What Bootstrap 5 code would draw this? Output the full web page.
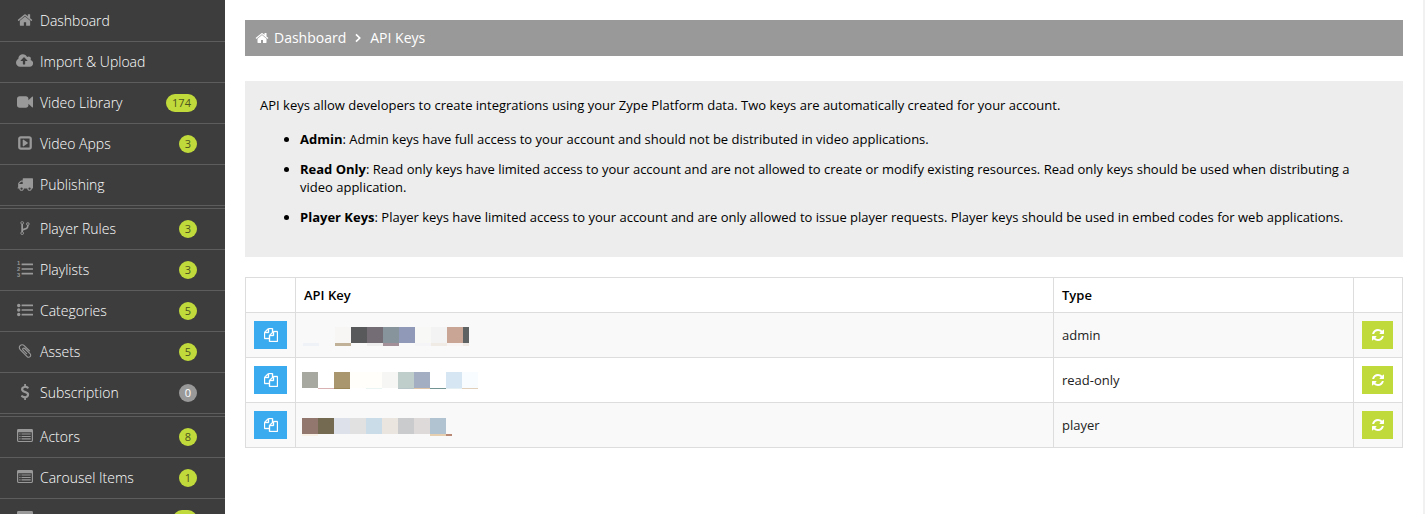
<!DOCTYPE html>
<html lang="en">
<head>
<meta charset="utf-8">
<meta name="viewport" content="width=device-width, initial-scale=1">
<title>API Keys</title>
<link href="https://cdn.jsdelivr.net/npm/bootstrap@5.3.0/dist/css/bootstrap.min.css" rel="stylesheet">
<style>
body{font-family:"Open Sans",sans-serif;font-size:13px;line-height:18px;color:#000;background:#fff;height:100vh;overflow:hidden}
.ico{fill:currentColor;display:block;overflow:visible;flex:none}
.sidebar{width:225px;background:#3d3d3d;padding-top:1px;height:514px;overflow:hidden}
.side-link{height:41px;padding:0 28px 0 15px;border-bottom:1px solid #5d5d5d;color:#fff;font-size:14px;font-weight:300;text-decoration:none;flex:none}
.side-link.group-start{border-top:1px solid #5d5d5d;height:42px;margin-top:2px}
.side-ico{width:20px;margin-right:5px;color:#999;position:relative;top:-1px}
.count{min-width:18px;height:18px;border-radius:9px;background:#c1da3b;color:#4c5320;font-size:11px;font-weight:400;line-height:18px;padding:0 6px;text-align:center}
.count.wide{padding:0 6px;min-width:31px}
.count.zero{background:#999;color:#fff}
.main-col{padding:20px 20px 0;border-right:2px solid #f1f1f1;height:514px}
.crumbs{height:36px;background:#999;color:#fff;font-size:14px;padding:0 10px;margin-bottom:25px}
.info{background:#ededed;padding:15px 15px 19px;height:176px;margin-bottom:20px}
.info p{margin-bottom:16px}
.info ul{padding:0 25px 0 40px;margin:0}
.info li{margin-bottom:12px}
.info li b{font-weight:700}
.keys{--bs-table-color:#222;--bs-table-striped-color:#222;--bs-table-striped-bg:#f9f9f9;border-color:#ddd;table-layout:fixed;width:1158px;border-collapse:collapse}
.keys th{font-weight:600;color:#000;height:35px}
.keys td{height:45px}
.keys.table>:not(caption)>*>*{padding:0 8px;vertical-align:middle;border-width:1px}
.sq{height:28px;border:0;border-radius:0;padding:0;color:#fff;display:flex;align-items:center;justify-content:center}
.sq-copy{width:33px;background:#3aabee}
.sq-copy .ico{stroke:#fff;stroke-width:45px}
.sq .ico{margin-bottom:1px}
.sq-cycle{width:31px;background:#c1da3b}
.masked{display:block;margin-left:-2px;shape-rendering:crispEdges}
</style>
</head>
<body>
<svg class="d-none" xmlns="http://www.w3.org/2000/svg">
<symbol id="home" viewBox="0 0 1792 1792"><path d="M1472 992v480q0 26-19 45t-45 19h-384v-384h-256v384h-384q-26 0-45-19t-19-45v-480q0-1 .5-3t.5-3l575-474 575 474q1 2 1 6zm223-69l-62 74q-8 9-21 11h-3q-13 0-21-7l-692-577-692 577q-12 8-24 7-13-2-21-11l-62-74q-8-10-7-23.5t11-21.5l719-599q32-26 76-26t76 26l244 204v-195q0-14 9-23t23-9h192q14 0 23 9t9 23v408l219 182q10 8 11 21.5t-7 23.5z"/></symbol>
<symbol id="cloud" viewBox="-64 0 1920 1792"><path d="M1216 864q0-14-9-23l-352-352q-9-9-23-9t-23 9l-351 351q-10 12-10 24 0 14 9 23t23 9h224v352q0 13 9.500 22.500t22.500 9.500h192q13 0 22.500-9.500t9.500-22.500v-352h224q13 0 22.500-9.500t9.500-22.500zm640 288q0 159-112.500 271.500t-271.500 112.500h-1088q-185 0-316.500-131.500t-131.500-316.500q0-130 70-240t188-165q-2-30-2-43 0-212 150-362t362-150q156 0 285.500 87t188.500 231q71-62 166-62 106 0 181 75t75 181q0 76-41 138 130 31 213.500 135.500t83.500 238.500z"/></symbol>
<symbol id="video" viewBox="0 0 1792 1792"><path d="M1792 352v1088q0 42-39 59-13 5-25 5-27 0-45-19l-403-403v166q0 119-84.500 203.500t-203.500 84.500h-704q-119 0-203.500-84.500t-84.500-203.500v-704q0-119 84.500-203.500t203.500-84.500h704q119 0 203.500 84.500t84.500 203.500v165l403-402q18-19 45-19 12 0 25 5 39 17 39 59z"/></symbol>
<symbol id="play" viewBox="0 0 1792 1792"><path d="M1216 896q0 33-27 52l-448 320q-17 12-37 12-15 0-29-7-35-17-35-57v-640q0-40 35-57 36-18 66 5l448 320q27 19 27 52zm192 480v-960q0-14-9-23t-23-9h-960q-14 0-23 9t-9 23v960q0 14 9 23t23 9h960q14 0 23-9t9-23zm256-960v960q0 119-84.500 203.500t-203.500 84.500h-960q-119 0-203.500-84.500t-84.500-203.500v-960q0-119 84.500-203.500t203.500-84.500h960q119 0 203.500 84.500t84.500 203.500z"/></symbol>
<symbol id="truck" viewBox="0 0 1792 1792"><path d="M640 1408q0-52-38-90t-90-38-90 38-38 90 38 90 90 38 90-38 38-90zm-384-512h384v-256h-158q-13 0-22 9l-195 195q-9 9-9 22v30zm1280 512q0-52-38-90t-90-38-90 38-38 90 38 90 90 38 90-38 38-90zm256-1088v1024q0 15-4 26.500t-13.500 18.500-16.500 11.500-23.500 6-22.500 2-25.500 0-22.500-.5q0 106-75 181t-181 75-181-75-75-181h-384q0 106-75 181t-181 75-181-75-75-181h-64q-3 0-22.500.5t-25.500 0-22.500-2-23.500-6-16.500-11.500-13.500-18.500-4-26.500q0-26 19-45t45-19v-320q0-8-.5-35t0-38 2.500-34.500 6.500-37 14-30.500 22.500-30l198-198q19-19 50.500-32t58.500-13h160v-192q0-26 19-45t45-19h1024q26 0 45 19t19 45z"/></symbol>
<symbol id="fork" viewBox="0 0 1792 1792"><path d="M672 1472q0-40-28-68t-68-28-68 28-28 68 28 68 68 28 68-28 28-68zm0-1152q0-40-28-68t-68-28-68 28-28 68 28 68 68 28 68-28 28-68zm640 128q0-40-28-68t-68-28-68 28-28 68 28 68 68 28 68-28 28-68zm96 0q0 52-26 96.500t-70 69.500q-2 287-226 414-67 38-203 81-128 40-169.500 71t-41.500 100v26q44 25 70 69.500t26 96.500q0 80-56 136t-136 56-136-56-56-136q0-52 26-96.500t70-69.500v-820q-44-25-70-69.500t-26-96.500q0-80 56-136t136-56 136 56 56 136q0 52-26 96.500t-70 69.500v497q54-26 154-57 55-17 87.500-29.500t70.500-31 59-39.500 40.500-51 28-69.500 8.500-91.500q-44-25-70-69.500t-26-96.500q0-80 56-136t136-56 136 56 56 136z"/></symbol>
<symbol id="bars" viewBox="0 0 1792 1792"><rect x="512" y="288" width="1280" height="192" rx="32"/><rect x="512" y="800" width="1280" height="192" rx="32"/><rect x="512" y="1312" width="1280" height="192" rx="32"/></symbol>
<symbol id="ul" viewBox="0 0 1792 1792"><circle cx="192" cy="384" r="192"/><circle cx="192" cy="896" r="192"/><circle cx="192" cy="1408" r="192"/><use href="#bars" width="1792" height="1792"/></symbol>
<symbol id="clip" viewBox="0 0 1792 1792"><path d="M1596 1385q0 117-79 196t-196 79q-135 0-235-100l-777-776q-113-115-113-271 0-159 110-270t269-111q158 0 273 113l605 606q10 10 10 22 0 16-30.500 46.500t-46.500 30.500q-13 0-23-10l-606-607q-79-77-181-77-106 0-179 75t-73 181q0 105 76 181l776 777q63 63 145 63 64 0 106-42t42-106q0-82-63-145l-581-581q-26-24-60-24-29 0-48 19t-19 48q0 32 25 59l410 410q10 10 10 22 0 16-31 47t-47 31q-12 0-22-10l-410-410q-63-61-63-149 0-82 57-139t139-57q88 0 149 63l581 581q100 98 100 235z"/></symbol>
<symbol id="dollar" viewBox="0 0 1792 1792"><path d="M1362 1185q0 153-99.500 263.500t-258.500 136.500v175q0 14-9 23t-23 9h-135q-13 0-22.500-9.500t-9.500-22.500v-175q-66-9-127.500-31t-101.500-44.500-74-48-46.500-37.500-17.500-18q-17-21-2-41l103-135q7-10 23-12 15-2 24 9l2 2q113 99 243 125 37 8 74 8 81 0 142.500-43t61.500-122q0-28-15-53t-33.500-42-58.500-37.500-66-32-80-32.500q-39-16-61.500-25t-61.500-26.500-62.500-31-56.500-35.500-53.500-42.500-43.500-49-35.500-58-21-66.500-8.500-78q0-138 98-242t255-134v-180q0-13 9.500-22.500t22.500-9.500h135q14 0 23 9t9 23v176q57 6 110.500 23t87 33.500 63.500 37.500 39 29 15 14q17 18 5 38l-81 146q-8 15-23 16-14 3-27-7-3-3-14.500-12t-39-26.500-58.500-32-74.500-26-85.500-11.500q-95 0-155 43t-60 111q0 26 8.500 48t29.500 41.500 39.500 33 56 31 60.500 27 70 27.500q53 20 81 31.500t76 35 75.500 42.500 62 50 53 63.500 31.500 76.500 13 94z"/></symbol>
<symbol id="panel" viewBox="0 0 16 14"><path fill-rule="evenodd" d="M1.400 0h13.200A1.400 1.400 0 0 1 16 1.400v10.200a1.400 1.400 0 0 1-1.400 1.400H1.400A1.400 1.400 0 0 1 0 11.600V1.400A1.400 1.400 0 0 1 1.400 0zM1.200 3.300v8.200q0 .4.4.4h12.800q.4 0 .4-.4V3.300z"/><path d="M2.300 4.500h1.200v1.100H2.300zM4.500 4.500h9.200v1.100H4.500zM2.300 6.900h1.200V8H2.300zM4.500 6.900h9.200V8H4.500zM2.300 9.300h1.200v1.100H2.300zM4.500 9.300h9.200v1.100H4.500z"/></symbol>
<symbol id="copy" viewBox="0 0 1792 1792"><path d="M1696 384q40 0 68 28t28 68v1216q0 40-28 68t-68 28h-960q-40 0-68-28t-28-68v-288h-544q-40 0-68-28t-28-68v-672q0-40 20-88t48-76l408-408q28-28 76-48t88-20h416q40 0 68 28t28 68v328q68-40 128-40h416zm-544 213l-299 299h299v-299zm-640-384l-299 299h299v-299zm196 647l316-316v-416h-384v416q0 40-28 68t-68 28h-416v640h512v-256q0-40 20-88t48-76zm956 804v-1152h-384v416q0 40-28 68t-68 28h-416v640h896z"/></symbol>
<symbol id="cycle" viewBox="0 0 1792 1792"><path d="M1639 1056q0 5-1 7-64 268-268 434.500t-478 166.500q-146 0-282.500-55t-243.500-157l-129 129q-19 19-45 19t-45-19-19-45v-448q0-26 19-45t45-19h448q26 0 45 19t19 45-19 45l-137 137q71 66 161 102t187 36q134 0 250-65t186-179q11-17 53-117 8-23 30-23h192q13 0 22.500 9.500t9.500 22.500zm25-800v448q0 26-19 45t-45 19h-448q-26 0-45-19t-19-45 19-45l138-138q-148-137-349-137-134 0-250 65t-186 179q-11 17-53 117-8 23-30 23h-199q-13 0-22.500-9.500t-9.500-22.500v-7q65-268 270-434.500t480-166.500q146 0 284 55.500t245 156.500l130-129q19-19 45-19t45 19 19 45z"/></symbol>
</svg>
<div class="d-flex">
<nav class="sidebar d-flex flex-column flex-shrink-0">
<a href="#" class="side-link d-flex align-items-center"><span class="side-ico d-flex justify-content-center"><svg class="ico" width="16" height="16"><use href="#home"/></svg></span>Dashboard</a>
<a href="#" class="side-link d-flex align-items-center"><span class="side-ico d-flex justify-content-center"><svg class="ico" width="17.200" height="16"><use href="#cloud"/></svg></span>Import &amp; Upload</a>
<a href="#" class="side-link d-flex align-items-center"><span class="side-ico d-flex justify-content-center"><svg class="ico" width="16" height="16"><use href="#video"/></svg></span>Video Library<span class="count wide ms-auto">174</span></a>
<a href="#" class="side-link d-flex align-items-center"><span class="side-ico d-flex justify-content-center"><svg class="ico" width="16" height="16"><use href="#play"/></svg></span>Video Apps<span class="count ms-auto">3</span></a>
<a href="#" class="side-link d-flex align-items-center"><span class="side-ico d-flex justify-content-center"><svg class="ico" width="16" height="16"><use href="#truck"/></svg></span>Publishing</a>
<a href="#" class="side-link group-start d-flex align-items-center"><span class="side-ico d-flex justify-content-center"><svg class="ico" width="16" height="16"><use href="#fork"/></svg></span>Player Rules<span class="count ms-auto">3</span></a>
<a href="#" class="side-link d-flex align-items-center"><span class="side-ico d-flex justify-content-center"><svg class="ico" width="16" height="16" font-family="Liberation Sans, sans-serif" font-size="5.800" font-weight="700"><use href="#bars"/><text x="0" y="4.300">1</text><text x="0" y="10.200">2</text><text x="0" y="16.100">3</text></svg></span>Playlists<span class="count ms-auto">3</span></a>
<a href="#" class="side-link d-flex align-items-center"><span class="side-ico d-flex justify-content-center"><svg class="ico" width="16" height="16"><use href="#ul"/></svg></span>Categories<span class="count ms-auto">5</span></a>
<a href="#" class="side-link d-flex align-items-center"><span class="side-ico d-flex justify-content-center"><svg class="ico" width="16" height="16"><use href="#clip"/></svg></span>Assets<span class="count ms-auto">5</span></a>
<a href="#" class="side-link d-flex align-items-center"><span class="side-ico d-flex justify-content-center"><svg class="ico" width="16" height="16"><use href="#dollar"/></svg></span>Subscription<span class="count zero ms-auto">0</span></a>
<a href="#" class="side-link group-start d-flex align-items-center"><span class="side-ico d-flex justify-content-center"><svg class="ico" width="16" height="14"><use href="#panel"/></svg></span>Actors<span class="count ms-auto">8</span></a>
<a href="#" class="side-link d-flex align-items-center"><span class="side-ico d-flex justify-content-center"><svg class="ico" width="16" height="14"><use href="#panel"/></svg></span>Carousel Items<span class="count ms-auto">1</span></a>
<a href="#" class="side-link d-flex align-items-center"><span class="side-ico d-flex justify-content-center"><svg class="ico" width="16" height="14"><use href="#panel"/></svg></span><span class="count ms-auto px-0" style="width:24px"></span></a>
</nav>
<main class="main-col flex-grow-1">
<div class="crumbs d-flex align-items-center"><svg class="ico" width="14" height="14"><use href="#home"/></svg><span class="ps-1 ms-n1" style="margin-left:1px">Dashboard</span><svg class="ico" width="24" height="14" viewBox="0 0 24 14"><path d="M10 3.300L13.700 7l-3.700 3.700" fill="none" stroke="#fff" stroke-width="1.700"/></svg><span>API Keys</span></div>
<section class="info">
<p>API keys allow developers to create integrations using your Zype Platform data. Two keys are automatically created for your account.</p>
<ul>
<li><b>Admin</b>: Admin keys have full access to your account and should not be distributed in video applications.</li>
<li><b>Read Only</b>: Read only keys have limited access to your account and are not allowed to create or modify existing resources. Read only keys should be used when distributing a video application.</li>
<li><b>Player Keys</b>: Player keys have limited access to your account and are only allowed to issue player requests. Player keys should be used in embed codes for web applications.</li>
</ul>
</section>
<table class="table table-bordered table-striped keys mb-0">
<colgroup><col style="width:50px"><col style="width:758px"><col style="width:300px"><col style="width:49px"></colgroup>
<thead><tr><th></th><th>API Key</th><th>Type</th><th></th></tr></thead>
<tbody>
<tr><td><button class="btn sq sq-copy" aria-label="Copy"><svg class="ico" width="14" height="14"><use href="#copy"/></svg></button></td>
<td><svg class="masked" width="180" height="22">
<g><rect x="33" y="3" width="16" height="16" fill="#f8f6f5"/><rect x="49" y="3" width="16" height="16" fill="#57595b"/><rect x="65" y="3" width="16" height="16" fill="#746d75"/><rect x="81" y="3" width="16" height="16" fill="#87949c"/><rect x="97" y="3" width="16" height="16" fill="#9099b8"/><rect x="113" y="3" width="16" height="16" fill="#f8f8f6"/><rect x="129" y="3" width="16" height="16" fill="#f3f3f4"/><rect x="145" y="3" width="16" height="16" fill="#c8a595"/><rect x="161" y="3" width="6" height="16" fill="#5f6262"/></g>
<g><rect x="1" y="19" width="16" height="3" fill="#eff3f8"/><rect x="33" y="19" width="16" height="3" fill="#c0b198"/><rect x="65" y="19" width="16" height="3" fill="#eee"/><rect x="81" y="19" width="16" height="3" fill="#a28f98"/><rect x="113" y="19" width="16" height="3" fill="#f5f5f8"/><rect x="129" y="19" width="16" height="3" fill="#f0ebe4"/><rect x="145" y="19" width="16" height="3" fill="#f7f4f3"/><rect x="161" y="19" width="6" height="3" fill="#eee9e4"/></g></svg></td>
<td>admin</td><td><button class="btn sq sq-cycle" aria-label="Regenerate"><svg class="ico" width="14" height="14"><use href="#cycle"/></svg></button></td></tr>
<tr><td><button class="btn sq sq-copy" aria-label="Copy"><svg class="ico" width="14" height="14"><use href="#copy"/></svg></button></td>
<td><svg class="masked" width="180" height="18">
<g><rect x="0" y="1" width="16" height="16" fill="#a7a89f"/><rect x="32" y="1" width="16" height="16" fill="#a9966f"/><rect x="48" y="1" width="32" height="16" fill="#fffefa"/><rect x="80" y="1" width="16" height="16" fill="#f6f7f5"/><rect x="96" y="1" width="16" height="16" fill="#bfcecb"/><rect x="112" y="1" width="16" height="16" fill="#a3aec2"/><rect x="144" y="1" width="16" height="16" fill="#d6e6f2"/><rect x="160" y="1" width="16" height="16" fill="#f8fcff"/></g>
<g><rect x="16" y="17" width="16" height="1" fill="#d9b3b3"/><rect x="32" y="17" width="16" height="1" fill="#9b8658"/><rect x="64" y="17" width="16" height="1" fill="#e9f4f3"/><rect x="96" y="17" width="16" height="1" fill="#b7c5c8"/><rect x="112" y="17" width="16" height="1" fill="#dfc4a5"/><rect x="128" y="17" width="16" height="1" fill="#729492"/><rect x="144" y="17" width="16" height="1" fill="#e4eff4"/><rect x="160" y="17" width="16" height="1" fill="#dfcfbb"/></g></svg></td>
<td>read-only</td><td><button class="btn sq sq-cycle" aria-label="Regenerate"><svg class="ico" width="14" height="14"><use href="#cycle"/></svg></button></td></tr>
<tr><td><button class="btn sq sq-copy" aria-label="Copy"><svg class="ico" width="14" height="14"><use href="#copy"/></svg></button></td>
<td><svg class="masked" width="180" height="22">
<g><rect x="0" y="4" width="16" height="16" fill="#92776f"/><rect x="16" y="4" width="16" height="16" fill="#746951"/><rect x="32" y="4" width="16" height="16" fill="#dde2ea"/><rect x="48" y="4" width="16" height="16" fill="#e1e1e1"/><rect x="64" y="4" width="16" height="16" fill="#cadce8"/><rect x="80" y="4" width="16" height="16" fill="#ebe5df"/><rect x="96" y="4" width="16" height="16" fill="#cacbcd"/><rect x="112" y="4" width="16" height="16" fill="#dddad9"/><rect x="128" y="4" width="16" height="16" fill="#b1c3d1"/></g>
<g><rect x="0" y="20" width="16" height="2" fill="#f8f0e5"/><rect x="128" y="20" width="16" height="2" fill="#e6ceb0"/><rect x="144" y="20" width="6" height="2" fill="#b98875"/></g></svg></td>
<td>player</td><td><button class="btn sq sq-cycle" aria-label="Regenerate"><svg class="ico" width="14" height="14"><use href="#cycle"/></svg></button></td></tr>
</tbody>
</table>
</main>
</div>
<script src="https://cdn.jsdelivr.net/npm/bootstrap@5.3.0/dist/js/bootstrap.bundle.min.js"></script>
</body>
</html>
